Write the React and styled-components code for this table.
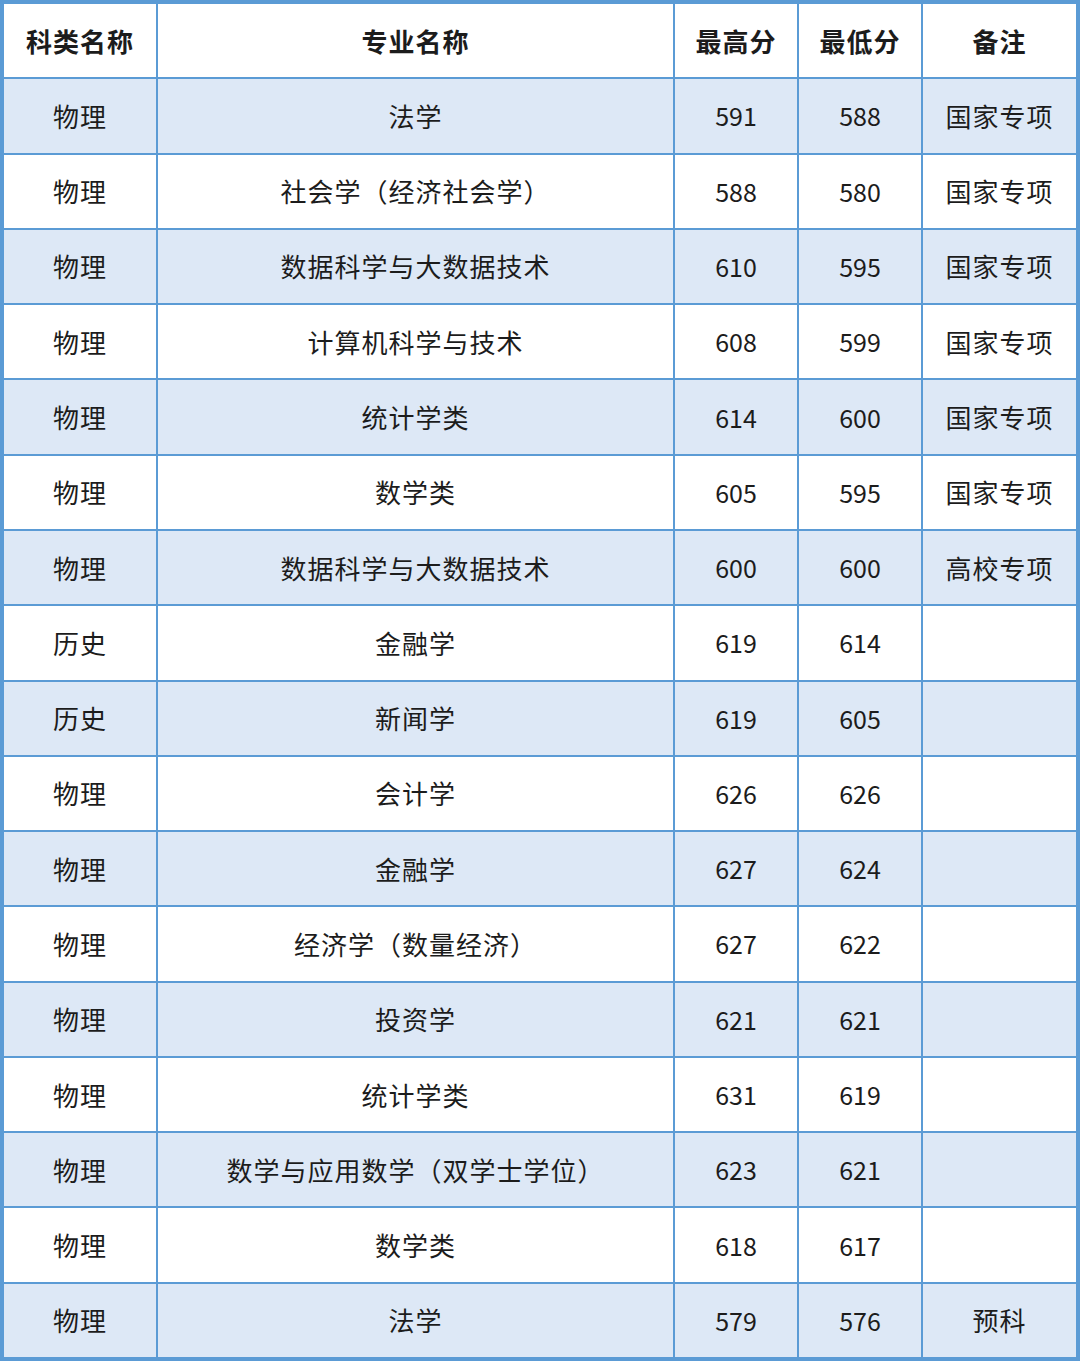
import styled, { createGlobalStyle } from 'styled-components';

const GlobalStyle = createGlobalStyle`
  html, body {
    margin: 0;
    padding: 0;
    background: #ffffff;
  }
`;

const Table = styled.div`
  display: grid;
  grid-template-columns: 152px 515px 122px 122px 153px;
  grid-template-rows: repeat(18, 1fr);
  gap: 2px;
  padding: 4px;
  width: 1080px;
  height: 1361px;
  box-sizing: border-box;
  background-color: #5b9bd5;
  font-family: "Noto Sans CJK SC", "Noto Sans", sans-serif;
  color: #1c1c1c;
`;

const Cell = styled.div`
  display: flex;
  align-items: center;
  justify-content: center;
  background-color: ${props => (props.shaded ? '#dde8f6' : '#ffffff')};
  font-size: ${props => (props.numeric ? '25px' : '26px')};
  font-weight: ${props => (props.head ? 700 : 400)};
  letter-spacing: ${props => (props.numeric ? '0' : '1px')};
  line-height: 1;
`;

const headers = ['科类名称', '专业名称', '最高分', '最低分', '备注'];

const rows = [
  ['物理', '法学', '591', '588', '国家专项'],
  ['物理', '社会学（经济社会学）', '588', '580', '国家专项'],
  ['物理', '数据科学与大数据技术', '610', '595', '国家专项'],
  ['物理', '计算机科学与技术', '608', '599', '国家专项'],
  ['物理', '统计学类', '614', '600', '国家专项'],
  ['物理', '数学类', '605', '595', '国家专项'],
  ['物理', '数据科学与大数据技术', '600', '600', '高校专项'],
  ['历史', '金融学', '619', '614', ''],
  ['历史', '新闻学', '619', '605', ''],
  ['物理', '会计学', '626', '626', ''],
  ['物理', '金融学', '627', '624', ''],
  ['物理', '经济学（数量经济）', '627', '622', ''],
  ['物理', '投资学', '621', '621', ''],
  ['物理', '统计学类', '631', '619', ''],
  ['物理', '数学与应用数学（双学士学位）', '623', '621', ''],
  ['物理', '数学类', '618', '617', ''],
  ['物理', '法学', '579', '576', '预科']
];

const App = () => (
  <>
    <GlobalStyle />
    <Table>
      {headers.map(h => (
        <Cell key={h} head>
          {h}
        </Cell>
      ))}
      {rows.map((row, i) =>
        row.map((value, j) => (
          <Cell key={`${i}-${j}`} shaded={i % 2 === 0} numeric={j === 2 || j === 3}>
            {value}
          </Cell>
        ))
      )}
    </Table>
  </>
);

export default App;
